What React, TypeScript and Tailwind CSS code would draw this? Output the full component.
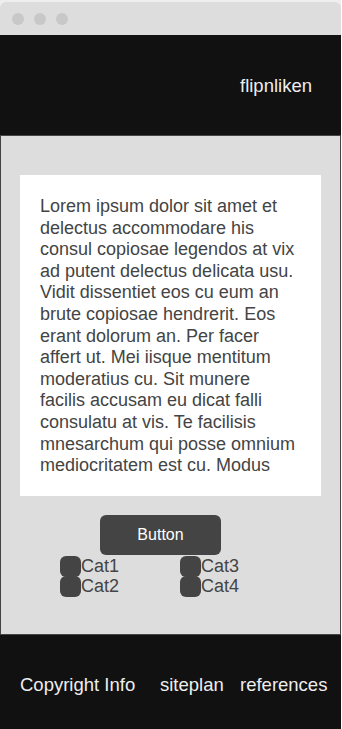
import React from "react";

const lines = [
  "Lorem ipsum dolor sit amet et",
  "delectus accommodare his",
  "consul copiosae legendos at vix",
  "ad putent delectus delicata usu.",
  "Vidit dissentiet eos cu eum an",
  "brute copiosae hendrerit. Eos",
  "erant dolorum an. Per facer",
  "affert ut. Mei iisque mentitum",
  "moderatius cu. Sit munere",
  "facilis accusam eu dicat falli",
  "consulatu at vis. Te facilisis",
  "mnesarchum qui posse omnium",
  "mediocritatem est cu. Modus",
];

function Cat({ label }: { label: string }) {
  return (
    <div className="flex items-center h-[20px]">
      <div className="w-[21px] h-[21px] rounded-[6px] bg-[#444444]" />
      <span className="text-[18px] leading-[20px] text-[#444444]">{label}</span>
    </div>
  );
}

export default function App() {
  return (
    <div
      className="w-[341px] h-[729px] bg-[#eeeeee] pt-[2px] overflow-hidden flex flex-col"
      style={{ fontFamily: '"Liberation Sans", Arial, sans-serif' }}
    >
      <div className="h-[33px] bg-[#dddddd] rounded-t-[6px] flex items-center gap-[10px] pl-[12px]">
        <div className="w-[12px] h-[12px] rounded-full bg-[#c8c8c8]" />
        <div className="w-[12px] h-[12px] rounded-full bg-[#c8c8c8]" />
        <div className="w-[12px] h-[12px] rounded-full bg-[#c8c8c8]" />
      </div>
      <div className="h-[100px] bg-[#111111] flex items-center pl-[240px] pt-[1px]">
        <span className="text-[18.5px] text-[#eeeeee]">flipnliken</span>
      </div>
      <div className="h-[500px] bg-[#dddddd] border border-[#444444] flex flex-col pt-[39px]">
        <div className="mx-[19px] h-[321px] bg-white px-[20px] pt-[21px]">
          <p className="text-[18px] leading-[21.6px] text-[#444444] whitespace-nowrap">
            {lines.map((l, i) => (
              <span key={i} className="block">
                {l}
              </span>
            ))}
          </p>
        </div>
        <div className="ml-[99px] mt-[19px] w-[121px] h-[40px] rounded-[6px] bg-[#444444] flex items-center justify-center">
          <span className="text-[16px] text-white">Button</span>
        </div>
        <div className="ml-[59px] grid grid-cols-[120px_120px] pt-[1px]">
          <Cat label="Cat1" />
          <Cat label="Cat3" />
          <Cat label="Cat2" />
          <Cat label="Cat4" />
        </div>
      </div>
      <div className="flex-1 bg-[#111111] flex items-center pl-[20px] pt-[6px] text-[18.5px] text-[#eeeeee]">
        <span className="w-[140px]">Copyright Info</span>
        <span className="w-[80px]">siteplan</span>
        <span>references</span>
      </div>
    </div>
  );
}
